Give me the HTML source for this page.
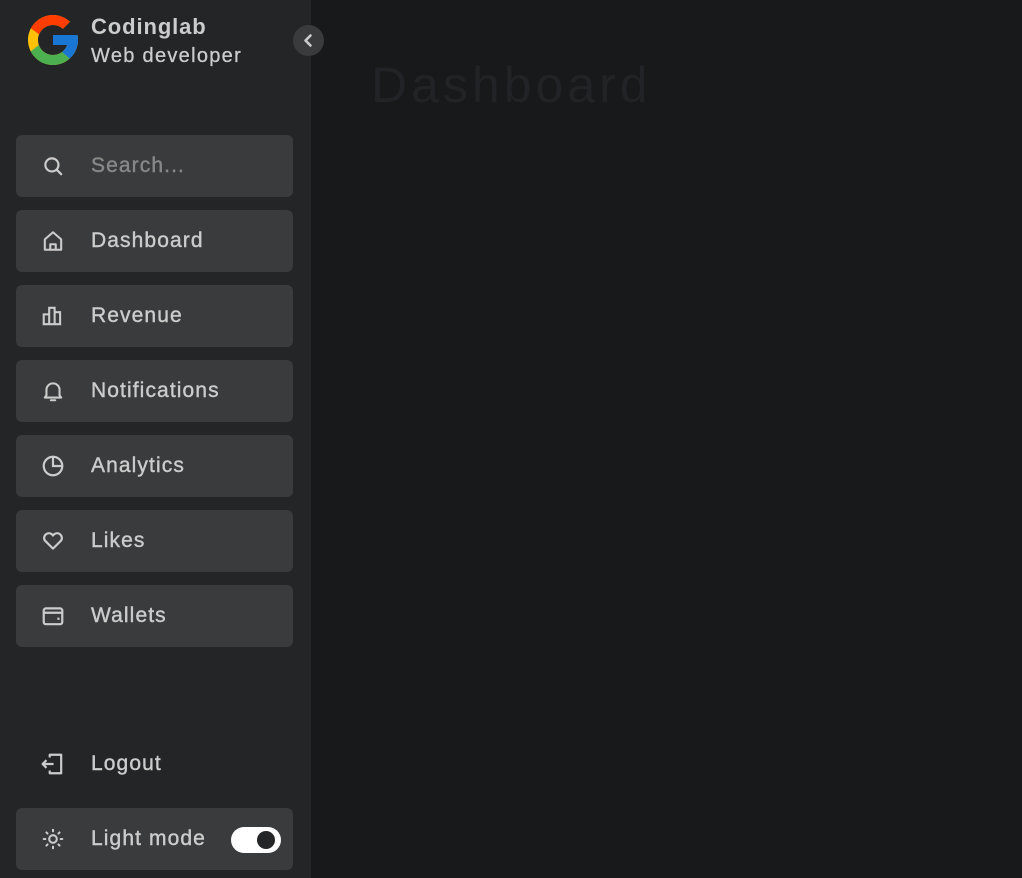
<!DOCTYPE html>
<html><head><style>
*{margin:0;padding:0;box-sizing:border-box}
body{width:1022px;height:878px;background:#18191a;font-family:"Liberation Sans",sans-serif;position:relative;overflow:hidden}
.side{position:absolute;left:0;top:0;width:311px;height:878px;background:#242526}
.logo{position:absolute;left:28px;top:15px}
.name{position:absolute;left:91px;top:14px;color:#ccc;font-size:22px;font-weight:700;letter-spacing:.9px}
.prof{position:absolute;left:91px;top:45px;color:#ccc;font-size:20px;letter-spacing:1.3px;-webkit-text-stroke:.3px #ccc}
.tog{position:absolute;left:293px;top:25px;width:31px;height:31px;border-radius:50%;background:#3a3b3c}
.item{position:absolute;left:16px;width:277px;height:62px;background:#3a3b3c;border-radius:6px}
.item .t,.lo .t{position:absolute;left:75px;top:50%;transform:translateY(-50%);color:#ccc;font-size:21px;letter-spacing:1.1px;-webkit-text-stroke:.4px #ccc}
.item svg,.lo svg{position:absolute;left:25px;top:50%;margin-top:-12px}
.lo{position:absolute;left:16px;top:733px;width:277px;height:62px}
.sw{position:absolute;left:215px;top:19px;width:50px;height:26px;background:#fff;border-radius:13px}
.sw:after{content:"";position:absolute;right:6px;top:4px;width:18px;height:18px;border-radius:50%;background:#242526}
h1{position:absolute;left:371px;top:56px;color:#222326;font-size:50px;font-weight:400;letter-spacing:4px}
</style></head><body>
<div class="side">
<svg class="logo" width="50" height="50" viewBox="4 4 40 40"><path fill="#FFC107" d="M43.6 20H24v8h11.3C33.7 32.7 29.2 36 24 36c-6.6 0-12-5.4-12-12s5.4-12 12-12c3.1 0 5.8 1.2 7.9 3.1l5.7-5.7C34 6.1 29.3 4 24 4 13 4 4 13 4 24s9 20 20 20 20-9 20-20c0-1.3-.1-2.7-.4-4z"/><path fill="#FF3D00" d="M6.3 14.7l6.6 4.8C14.7 15.1 19 12 24 12c3.1 0 5.800 1.2 7.9 3.1l5.7-5.7C34 6.1 29.3 4 24 4 16.3 4 9.7 8.3 6.3 14.7z"/><path fill="#4CAF50" d="M24 44c5.2 0 9.9-2 13.4-5.2l-6.2-5.2C29.2 35.1 26.7 36 24 36c-5.2 0-9.6-3.3-11.3-7.9l-6.500 5C9.5 39.6 16.2 44 24 44z"/><path fill="#1976D2" d="M43.6 20H24v8h11.3c-.8 2.2-2.2 4.2-4.1 5.6l6.2 5.2C37 39.2 44 34 44 24c0-1.3-.1-2.7-.4-4z"/></svg>
<div class="name">Codinglab</div>
<div class="prof">Web developer</div>
<div class="tog"><svg width="31" height="31" viewBox="0 0 31 31"><path d="M17.5 10.5l-5 5 5 5" stroke="#ccc" stroke-width="2.6" fill="none" stroke-linecap="round" stroke-linejoin="round"/></svg></div>

<div class="item" style="top:135px"><svg width="24" height="24" viewBox="0 0 22 22" fill="none" stroke="#ccc" stroke-width="2"><circle cx="10" cy="10" r="6"/><path d="M14.5 14.5l4 4" stroke-linecap="round"/></svg><span class="t" style="color:#888;-webkit-text-stroke:.4px #888">Search...</span></div>
<div class="item" style="top:210px"><svg width="24" height="24" viewBox="0 0 22 22" fill="none" stroke="#ccc" stroke-width="1.9" stroke-linejoin="round"><path d="M3.5 9.5L11 3l7.5 6.5V19h-15z"/><path d="M8.5 19v-5h5v5"/></svg><span class="t">Dashboard</span></div>
<div class="item" style="top:285px"><svg width="24" height="24" viewBox="0 0 22 22" fill="none" stroke="#ccc" stroke-width="1.9"><path d="M2.5 18.5V9.5h5v9M7.5 18.5V3.5h5v15M12.5 18.5V7.5h5v11zM1.5 18.5h17"/></svg><span class="t">Revenue</span></div>
<div class="item" style="top:360px"><svg width="24" height="24" viewBox="0 0 22 22" fill="none" stroke="#ccc" stroke-width="1.9" stroke-linejoin="round"><path d="M5 15V10a6 6 0 0112 0v5l1.5 2h-15z"/><path d="M9 19.5h4" stroke-linecap="round"/></svg><span class="t">Notifications</span></div>
<div class="item" style="top:435px"><svg width="24" height="24" viewBox="0 0 22 22" fill="none" stroke="#ccc" stroke-width="2"><circle cx="11" cy="11" r="8.5"/><path d="M11 2.5V11h8.5"/></svg><span class="t">Analytics</span></div>
<div class="item" style="top:510px"><svg width="24" height="24" viewBox="0 0 22 22" fill="none" stroke="#ccc" stroke-width="2" stroke-linejoin="round"><path d="M11 18L3.5 10.5a4.3 4.3 0 017.5-4.5 4.3 4.3 0 017.5 4.5z"/></svg><span class="t">Likes</span></div>
<div class="item" style="top:585px"><svg width="24" height="24" viewBox="0 0 22 22" fill="none" stroke="#ccc" stroke-width="2"><rect x="2.5" y="4" width="17" height="14.5" rx="2"/><path d="M2.5 8h17M15 13.5h2"/></svg><span class="t">Wallets</span></div>

<div class="lo"><svg width="24" height="24" viewBox="0 0 22 22" fill="none" stroke="#ccc" stroke-width="2" stroke-linejoin="round"><path d="M8 5V2.5h10.5v17H8V17"/><path d="M1.5 11h10M5 7.5L1.5 11 5 14.5"/></svg><span class="t">Logout</span></div>
<div class="item" style="top:808px"><svg width="24" height="24" viewBox="0 0 22 22" fill="none" stroke="#ccc" stroke-width="1.9" stroke-linecap="round"><circle cx="11" cy="11" r="3.5"/><path d="M11 2.5v1.5M11 18v1.5M2.5 11H4M18 11h1.5M5 5l1 1M16 16l1 1M5 17l1-1M16 6l1-1"/></svg><span class="t">Light mode</span><div class="sw"></div></div>
</div>
<h1>Dashboard</h1>
</body></html>
